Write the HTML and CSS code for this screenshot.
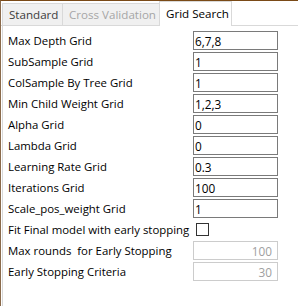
FILE: index.html
```html
<!DOCTYPE html>
<html>
<head>
<meta charset="utf-8">
<link rel="stylesheet" href="styles.css">
</head>
<body>
<div class="window">
  <div class="tabstrip">
    <div class="tab first">Standard</div>
    <div class="tab disabled">Cross Validation</div>
    <div class="tab active">Grid Search</div>
  </div>
  <div class="panel">
    <div class="row"><span class="label">Max Depth Grid</span><input class="field" type="text" value="6,7,8"></div>
    <div class="row"><span class="label">SubSample Grid</span><input class="field" type="text" value="1"></div>
    <div class="row"><span class="label">ColSample By Tree Grid</span><input class="field" type="text" value="1"></div>
    <div class="row"><span class="label">Min Child Weight Grid</span><input class="field" type="text" value="1,2,3"></div>
    <div class="row"><span class="label">Alpha Grid</span><input class="field" type="text" value="0"></div>
    <div class="row"><span class="label">Lambda Grid</span><input class="field" type="text" value="0"></div>
    <div class="row"><span class="label">Learning Rate Grid</span><input class="field" type="text" value="0.3"></div>
    <div class="row"><span class="label">Iterations Grid</span><input class="field" type="text" value="100"></div>
    <div class="row"><span class="label">Scale_pos_weight Grid</span><input class="field" type="text" value="1"></div>
    <div class="row"><span class="label">Fit Final model with early stopping</span><span class="check"></span></div>
    <div class="row"><span class="label">Max rounds&nbsp; for Early Stopping</span><input class="field off" type="text" value="100" disabled></div>
    <div class="row"><span class="label">Early Stopping Criteria</span><input class="field off" type="text" value="30" disabled></div>
  </div>
</div>
</body>
</html>
```

FILE: styles.css
```css
* { box-sizing: border-box; }
html, body {
  margin: 0;
  padding: 0;
  background: #ffffff;
}
body {
  width: 298px;
  height: 306px;
  overflow: hidden;
  font-family: "Open Sans", "Noto Sans", sans-serif;
  font-size: 11.4px;
  color: #000;
}
.window {
  height: 306px;
  border-top: 1px solid #7a4a17;
  border-left: 1px solid #8a6a4a;
  display: flex;
  flex-direction: column;
}
.tabstrip {
  height: 25px;
  display: flex;
  align-items: flex-end;
  padding-left: 1px;
  border-bottom: 1px solid #d9d9d9;
  flex: none;
}
.tab {
  height: 22px;
  background: #f0f0f0;
  border: 1px solid #d9d9d9;
  border-bottom: none;
  border-left: none;
  padding: 0 6px;
  display: flex;
  align-items: center;
  color: #3c3c3c;
  white-space: nowrap;
  font-size: 11.6px;
}
.tab.first { border-left: 1px solid #d9d9d9; width: 61px; }
.tab.disabled { color: #a6a6a6; width: 97px; }
.tab.active {
  height: 25px;
  margin-bottom: -1px;
  background: #fff;
  border-left: 1px solid #d9d9d9;
  margin-left: -1px;
  width: 73px;
  color: #000;
  padding-bottom: 2px;
}
.panel {
  flex: 1;
  border-left: 1px solid #d9d9d9;
  margin-left: 1px;
  padding: 4px 0 0 5px;
  display: flex;
  flex-direction: column;
}
.row {
  height: 21px;
  display: grid;
  grid-template-columns: 185px 85px;
  align-items: center;
}
.label {
  white-space: nowrap;
  color: #000;
}
.field {
  width: 85px;
  height: 19px;
  border: 1px solid #7a7a7a;
  padding: 0 1px;
  margin: 0;
  font: inherit;
  font-size: 11.8px;
  color: #000;
  background: #fff;
  outline: none;
}
.field.off {
  border-color: #cccccc;
  color: #a0a0a0;
  text-align: right;
  padding-right: 5px;
  background: #fff;
}
.check {
  width: 13px;
  height: 13px;
  border: 1px solid #333;
  margin-left: 3px;
  background: #fff;
}
```
